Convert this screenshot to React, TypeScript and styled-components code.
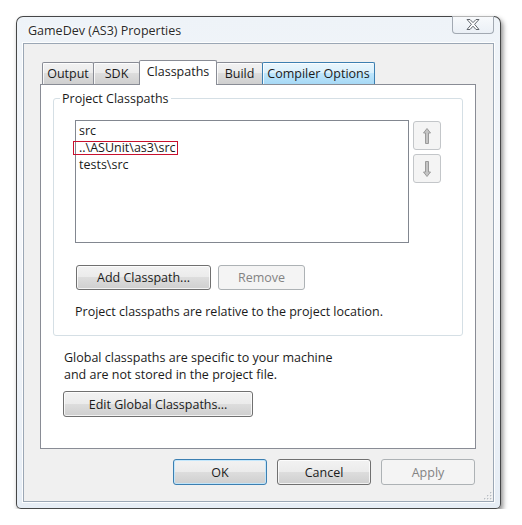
import React from 'react';
import styled, { createGlobalStyle, css } from 'styled-components';

const GlobalStyle = createGlobalStyle`
  html, body {
    margin: 0;
    background: #ffffff;
  }
  body {
    font-family: "Open Sans", "Noto Sans", "DejaVu Sans", sans-serif;
    font-size: 12.5px;
    color: #1b1b1b;
  }
`;

const Window = styled.div`
  margin: 16px 0 0 16px;
  width: 485px;
  height: 493px;
  box-sizing: border-box;
  border: 1px solid rgba(40, 40, 40, 0.85);
  border-radius: 7px 7px 5px 5px;
  background: linear-gradient(180deg, #eef3f8 0%, #f6f8fb 40%, #e6edf5 100%);
  box-shadow: 2px 3px 5px rgba(0, 0, 0, 0.45);
  padding: 0 6px 6px 6px;
  display: flex;
  flex-direction: column;
`;

const TitleBar = styled.div`
  height: 26px;
  display: flex;
  align-items: center;
  justify-content: space-between;
  padding-left: 5px;
`;

const Title = styled.span`
  color: #2a2a2a;
  text-shadow: 0 0 6px #ffffff, 0 0 3px #ffffff;
  padding-top: 1px;
`;

const CloseButton = styled.div`
  align-self: flex-start;
  margin-top: -1px;
  width: 40px;
  height: 17px;
  border: 1px solid #a2a9b2;
  border-top: none;
  border-radius: 0 0 4px 4px;
  background: linear-gradient(180deg, rgba(255, 255, 255, 0.6), rgba(230, 236, 243, 0.5));
  display: flex;
  align-items: center;
  justify-content: center;
`;

const Client = styled.div`
  position: relative;
  flex: 1;
  background: #f0f0f0;
  border: 1px solid #9ba7b5;
  box-shadow: 0 0 0 1px rgba(255, 255, 255, 0.85);
  padding: 16px 17px 0 16px;
  display: flex;
  flex-direction: column;
`;

const TabStrip = styled.div`
  height: 24px;
  display: flex;
  align-items: flex-end;
  padding-left: 2px;
`;

const Tab = styled.div<{ $w: number; $state?: 'active' | 'hover' }>`
  position: relative;
  box-sizing: border-box;
  width: ${p => p.$w}px;
  height: 22px;
  margin-left: -1px;
  border: 1px solid #898c95;
  border-bottom: none;
  border-radius: 2px 2px 0 0;
  background: linear-gradient(180deg, #f2f2f2 0%, #ebebeb 50%, #dddddd 50%, #cfcfcf 100%);
  box-shadow: inset 1px 1px 0 rgba(255, 255, 255, 0.8);
  display: flex;
  align-items: center;
  justify-content: center;
  white-space: nowrap;

  &:first-child {
    margin-left: 0;
  }

  ${p =>
    p.$state === 'active' &&
    css`
      z-index: 2;
      height: 25px;
      margin-bottom: -1px;
      background: #ffffff;
      box-shadow: none;
      padding-bottom: 3px;
    `}

  ${p =>
    p.$state === 'hover' &&
    css`
      z-index: 1;
      border-color: #3c7fb1;
      background: linear-gradient(180deg, #eaf6fd 0%, #d9f0fc 50%, #bee6fd 50%, #a7d9f5 100%);
    `}
`;

const Panel = styled.div`
  box-sizing: border-box;
  height: 365px;
  background: #ffffff;
  border: 1px solid #898c95;
  display: flex;
  flex-direction: column;
`;

const Group = styled.fieldset`
  margin: 5px 12px 0 12px;
  border: 1px solid #d5dfe5;
  border-radius: 3px;
  padding: 13px 0 15px 6px;
  box-shadow: inset 0 0 0 1px rgba(255, 255, 255, 0.9);
`;

const Legend = styled.legend`
  padding: 0 2px;
  line-height: 17px;
`;

const GroupBody = styled.div`
  padding-left: 15px;
  display: flex;
  flex-direction: column;
`;

const ListRow = styled.div`
  display: flex;
  gap: 4px;
  align-items: flex-start;
`;

const ListBox = styled.div`
  box-sizing: border-box;
  width: 334px;
  height: 123px;
  border: 1px solid #828790;
  background: #ffffff;
  padding: 1px 3px;
`;

const ListItem = styled.div`
  line-height: 17px;
  white-space: nowrap;
`;

const Marked = styled.span`
  position: relative;

  &::after {
    content: '';
    position: absolute;
    left: -6px;
    right: -2px;
    top: 2px;
    bottom: 1px;
    border: 1px solid #c8102e;
  }
`;

const MoveButtons = styled.div`
  display: flex;
  flex-direction: column;
  gap: 4px;
  margin-top: 1px;
`;

const MoveButton = styled.div`
  box-sizing: border-box;
  width: 28px;
  height: 29px;
  border: 1px solid #c3c6c9;
  border-radius: 3px;
  background: #f4f4f4;
  display: flex;
  align-items: center;
  justify-content: center;
`;

const ButtonRow = styled.div`
  display: flex;
  gap: 7px;
  margin: 22px 0 0 1px;
`;

const Button = styled.div<{ $w: number; $h?: number; $variant?: 'default' | 'disabled' }>`
  box-sizing: border-box;
  width: ${p => p.$w}px;
  height: ${p => p.$h ?? 25}px;
  border: 1px solid #707070;
  border-radius: 3px;
  background: linear-gradient(180deg, #f2f2f2 0%, #ebebeb 50%, #dddddd 50%, #cfcfcf 100%);
  box-shadow: inset 0 0 0 1px rgba(255, 255, 255, 0.75);
  display: flex;
  align-items: center;
  justify-content: center;
  white-space: nowrap;
  color: #1b1b1b;

  ${p =>
    p.$variant === 'default' &&
    css`
      border-color: #3c7fb1;
      box-shadow: inset 0 0 0 1px rgba(190, 230, 253, 0.9);
    `}

  ${p =>
    p.$variant === 'disabled' &&
    css`
      border-color: #adb2b5;
      background: #f4f4f4;
      box-shadow: none;
      color: #838383;
    `}
`;

const Note = styled.div`
  margin-top: 13px;
  line-height: 17px;
`;

const GlobalSection = styled.div`
  padding: 13px 0 0 22px;
  display: flex;
  flex-direction: column;
  align-items: flex-start;
`;

const GlobalText = styled.div`
  line-height: 17px;
  padding-left: 1px;
  margin-bottom: 8px;
`;

const Footer = styled.div`
  display: flex;
  justify-content: flex-end;
  gap: 10px;
  margin-top: 10px;
  padding-right: 1px;
`;

const Grip = styled.svg`
  position: absolute;
  right: 1px;
  bottom: 1px;
`;

const CloseGlyph = () => (
  <svg width="14" height="11" viewBox="0 0 14 11">
    <polygon
      points="1,0.5 4,0.5 7,3.6 10,0.5 13,0.5 8.6,5.3 13,10.5 10,10.5 7,7.2 4,10.5 1,10.5 5.4,5.3"
      fill="#ffffff"
      stroke="#5f646b"
      strokeWidth="1"
      strokeLinejoin="round"
    />
  </svg>
);

const Arrow = ({ down }: { down?: boolean }) => (
  <svg width="8" height="16" viewBox="0 0 8 16" style={down ? { transform: 'rotate(180deg)' } : undefined}>
    <path d="M4 0.5 L7.5 5 L5.5 5 L5.5 15.5 L2.5 15.5 L2.5 5 L0.5 5 Z" fill="#c4c4c4" stroke="#9a9a9a" strokeWidth="1" strokeLinejoin="round" />
  </svg>
);

const tabs: { label: string; w: number; state?: 'active' | 'hover' }[] = [
  { label: 'Output', w: 52 },
  { label: 'SDK', w: 47 },
  { label: 'Classpaths', w: 78, state: 'active' },
  { label: 'Build', w: 47 },
  { label: 'Compiler Options', w: 113, state: 'hover' },
];

const classpaths = ['src', '..\\ASUnit\\as3\\src', 'tests\\src'];

export default function App() {
  return (
    <>
      <GlobalStyle />
      <Window>
        <TitleBar>
          <Title>GameDev (AS3) Properties</Title>
          <CloseButton>
            <CloseGlyph />
          </CloseButton>
        </TitleBar>
        <Client>
          <TabStrip>
            {tabs.map(t => (
              <Tab key={t.label} $w={t.w} $state={t.state}>
                {t.label}
              </Tab>
            ))}
          </TabStrip>
          <Panel>
            <Group>
              <Legend>Project Classpaths</Legend>
              <GroupBody>
                <ListRow>
                  <ListBox>
                    {classpaths.map((p, i) => (
                      <ListItem key={p}>{i === 1 ? <Marked>{p}</Marked> : p}</ListItem>
                    ))}
                  </ListBox>
                  <MoveButtons>
                    <MoveButton>
                      <Arrow />
                    </MoveButton>
                    <MoveButton>
                      <Arrow down />
                    </MoveButton>
                  </MoveButtons>
                </ListRow>
                <ButtonRow>
                  <Button $w={135}>Add Classpath...</Button>
                  <Button $w={87} $variant="disabled">Remove</Button>
                </ButtonRow>
                <Note>Project classpaths are relative to the project location.</Note>
              </GroupBody>
            </Group>
            <GlobalSection>
              <GlobalText>
                Global classpaths are specific to your machine
                <br />
                and are not stored in the project file.
              </GlobalText>
              <Button $w={190} $h={26}>Edit Global Classpaths...</Button>
            </GlobalSection>
          </Panel>
          <Footer>
            <Button $w={94} $h={26} $variant="default">OK</Button>
            <Button $w={94} $h={26}>Cancel</Button>
            <Button $w={94} $h={26} $variant="disabled">Apply</Button>
          </Footer>
          <Grip width="9" height="9" viewBox="0 0 9 9">
            {[
              [7, 1], [7, 4], [4, 4], [7, 7], [4, 7], [1, 7],
            ].map(([x, y]) => (
              <g key={`${x}-${y}`}>
                <rect x={x + 0.6} y={y + 0.6} width="1.4" height="1.4" fill="#ffffff" />
                <rect x={x} y={y} width="1.4" height="1.4" fill="#b9bec4" />
              </g>
            ))}
          </Grip>
        </Client>
      </Window>
    </>
  );
}
